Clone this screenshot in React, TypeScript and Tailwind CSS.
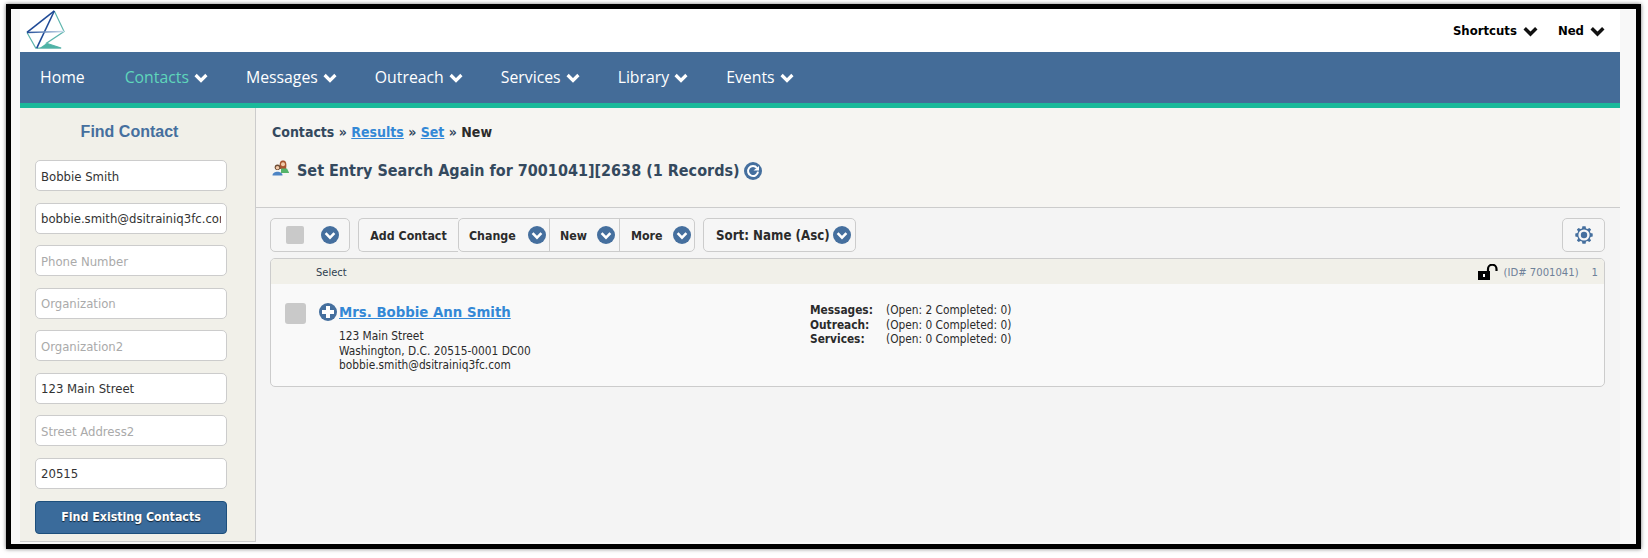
import React from 'react';

const tahoma = "font-['DejaVu_Sans_Condensed','DejaVu_Sans',sans-serif]";

function Chevron({ className = '', color = '#fff', width = 3.2 }: { className?: string; color?: string; width?: number }) {
  return (
    <svg viewBox="0 0 14 10" className={className} fill="none">
      <path d="M1.6 2 L7 7.4 L12.4 2" stroke={color} strokeWidth={width} />
    </svg>
  );
}

function CircleChevron({ className = '' }: { className?: string }) {
  return (
    <svg viewBox="0 0 18 18" className={`w-[18px] h-[18px] shrink-0 ${className}`}>
      <circle cx="9" cy="9" r="9" fill="#456f9e" />
      <path d="M4.6 7.2 L9 11.6 L13.4 7.2" stroke="#fff" strokeWidth="2.6" fill="none" />
    </svg>
  );
}

function Logo() {
  return (
    <svg viewBox="0 0 42 42" className="w-[41px] h-[41px]" fill="none">
      <defs>
        <linearGradient id="bar" x1="0" x2="1" y1="0" y2="0">
          <stop offset="0" stopColor="#1f4a96" />
          <stop offset="1" stopColor="#cfe0ee" />
        </linearGradient>
      </defs>
      <path d="M29 1 L39 22 L21 34 L36 39 L10 39 L1 23" stroke="#5db5ad" strokeWidth="1.2" />
      <path d="M21 34 L36 39 L14 39 Z" fill="#4fb3a6" />
      <path d="M29 1 L1 23" stroke="#1f4a96" strokeWidth="1.6" />
      <path d="M29 1 L11 39" stroke="#1f4a96" strokeWidth="1.6" />
      <path d="M1 23 L39 22" stroke="url(#bar)" strokeWidth="1.6" />
    </svg>
  );
}

function PeopleIcon() {
  return (
    <svg viewBox="0 0 17 16" className="w-[17px] h-[16px] shrink-0 mt-[-7px]">
      {/* back person */}
      <path d="M8 9 C7 3 8 0.5 11 0.5 C14 0.5 15 3 14 9 Z" fill="#a8552f" />
      <circle cx="11" cy="4.2" r="2" fill="#f2c9a8" />
      <path d="M9 13 V8.5 H15 L17 12.5 V13 Z" fill="#55b36a" />
      {/* front person */}
      <circle cx="5.5" cy="7.2" r="2.8" fill="#6b4a32" />
      <circle cx="5.5" cy="7.8" r="1.8" fill="#f2c9a8" />
      <path d="M0.5 15.5 C0.5 10.5 10.5 10.5 10.5 15.5 Z" fill="#4d84c4" />
    </svg>
  );
}

function RefreshIcon() {
  return (
    <svg viewBox="0 0 18 18" className="w-[18px] h-[18px] shrink-0">
      <circle cx="9" cy="9" r="9" fill="#456f9e" />
      <path d="M13 6 A5 5 0 1 0 14 9.6" stroke="#fff" strokeWidth="2" fill="none" />
      <path d="M9.5 8.6 H15 V4 Z" fill="#fff" />
    </svg>
  );
}

function GearIcon() {
  return (
    <svg viewBox="0 0 18 18" className="w-[18px] h-[18px]">
      <path
        d="M7.4 0.3 H10.6 L11 2.5 L12.5 3.1 L14.4 1.9 L16.1 3.6 L14.9 5.5 L15.5 7 L17.7 7.4 V10.6 L15.5 11 L14.9 12.5 L16.1 14.4 L14.4 16.1 L12.5 14.9 L11 15.5 L10.6 17.7 H7.4 L7 15.5 L5.5 14.9 L3.6 16.1 L1.9 14.4 L3.1 12.5 L2.5 11 L0.3 10.6 V7.4 L2.5 7 L3.1 5.5 L1.9 3.6 L3.6 1.9 L5.5 3.1 L7 2.5 Z"
        fill="#456f9e"
      />
      <circle cx="9" cy="9" r="5.6" fill="#f6f6f6" />
      <circle cx="9" cy="9" r="3.2" fill="#456f9e" />
    </svg>
  );
}

function UnlockIcon() {
  return (
    <svg viewBox="0 0 20 16" className="w-[20px] h-[16px] shrink-0">
      <rect x="0" y="7" width="12" height="9" fill="#000" />
      <rect x="5" y="10" width="2" height="3" fill="#fff" />
      <path d="M10 8 V5 A4 4 0 0 1 18.5 5 V7" stroke="#000" strokeWidth="2.2" fill="none" />
    </svg>
  );
}

function PlusIcon() {
  return (
    <svg viewBox="0 0 18 18" className="w-[18px] h-[18px] shrink-0">
      <circle cx="9" cy="9" r="9" fill="#456f9e" />
      <path d="M9 3 V15 M3 9 H15" stroke="#fff" strokeWidth="4" />
    </svg>
  );
}

const navItems = ['Contacts', 'Messages', 'Outreach', 'Services', 'Library', 'Events'];

const fields = [
  { value: 'Bobbie Smith', placeholder: 'Name' },
  { value: 'bobbie.smith@dsitrainiq3fc.com', placeholder: 'Email' },
  { value: '', placeholder: 'Phone Number' },
  { value: '', placeholder: 'Organization' },
  { value: '', placeholder: 'Organization2' },
  { value: '123 Main Street', placeholder: 'Street Address' },
  { value: '', placeholder: 'Street Address2' },
  { value: '20515', placeholder: 'Zip' },
];

const stats = [
  { label: 'Messages:', value: '(Open: 2 Completed: 0)' },
  { label: 'Outreach:', value: '(Open: 0 Completed: 0)' },
  { label: 'Services:', value: '(Open: 0 Completed: 0)' },
];

export default function App() {
  return (
    <div className={`w-[1648px] h-[558px] bg-white pt-[4px] pl-[6px] overflow-hidden ${tahoma}`}>
      <div className="w-[1635px] h-[545px] border-[5px] border-black bg-[#f8f8f8] pl-[9px] shadow-[0_0_4px_#777]">
        <div className="w-[1600px]">
          {/* top bar */}
          <div className="h-[43px] bg-white flex items-center justify-between pl-[6px] pr-[15px]">
            <Logo />
            <div className="flex items-center text-[13px] font-bold text-black gap-[20px] pt-[1px]">
              <div className="flex items-center gap-[6px]">
                <span>Shortcuts</span>
                <Chevron className="w-[15px] h-[11px]" color="#111" />
              </div>
              <div className="flex items-center gap-[6px]">
                <span>Ned</span>
                <Chevron className="w-[15px] h-[11px]" color="#111" />
              </div>
            </div>
          </div>

          {/* nav */}
          <div className="h-[56px] bg-[#446c98] border-b-[5px] border-[#1ab99a] flex items-center pl-[20px] gap-[38px] font-['Open_Sans',sans-serif] text-[15.8px] text-white">
            <span className="mr-[2px]">Home</span>
            {navItems.map((item) => (
              <div key={item} className={`flex items-center gap-[5px] ${item === 'Contacts' ? 'text-[#5fd6bb]' : ''}`}>
                <span>{item}</span>
                <Chevron className="w-[14px] h-[10px] mt-[1px]" />
              </div>
            ))}
          </div>

          <div className="flex h-[434px]">
            {/* sidebar */}
            <div className="w-[236px] shrink-0 bg-[#f1f0e9] border-r border-b border-[#cccccc] px-[15px] pt-[15px]">
              <h2 className="text-center text-[16px] font-bold text-[#456f9e] font-['Liberation_Sans',sans-serif] leading-[18px] mb-[19px] mr-[16px]">
                Find Contact
              </h2>
              <div className="flex flex-col gap-[11.5px]">
                {fields.map((f) => (
                  <input
                    key={f.placeholder}
                    defaultValue={f.value}
                    placeholder={f.placeholder}
                    className="w-[192px] h-[31px] bg-white border border-[#cccccc] rounded-[5px] px-[5px] pt-[1px] text-[13px] text-[#333333] placeholder:text-[#aaaaaa] outline-none"
                  />
                ))}
                <button className="w-[192px] h-[33px] mt-[1px] bg-[#3a6b9b] border border-[#1d4f7c] rounded-[4px] text-white text-[12.3px] font-bold [text-shadow:0_1px_1px_#123]">
                  Find Existing Contacts
                </button>
              </div>
            </div>

            {/* main */}
            <div className="flex-1 min-w-0 bg-[#f4f4f4]">
              <div className="h-[100px] bg-[#f6f5f2] border-b border-[#cccccc] px-[16px] pt-[16px] text-[#34495e]">
                <div className="text-[14px] font-bold leading-[17px]">
                  Contacts » <a className="text-[#3388d6] underline">Results</a> » <a className="text-[#3388d6] underline">Set</a> »{' '}
                  <span className="text-[#2b2b2b]">New</span>
                </div>
                <div className="flex items-center mt-[19px]">
                  <PeopleIcon />
                  <span className="text-[16px] font-bold ml-[8px] mr-[4px] leading-[22px]">
                    Set Entry Search Again for 7001041][2638 (1 Records)
                  </span>
                  <RefreshIcon />
                </div>
              </div>

              <div className="pl-[14px] pr-[15px] pt-[10px]">
                {/* toolbar */}
                <div className="flex items-center h-[34px] text-[12.3px] font-bold text-[#2b2b2b]">
                  <div className="w-[80px] h-full border border-[#cccccc] rounded-[5px] bg-[#f6f6f6] flex items-center justify-between pl-[15px] pr-[10px]">
                    <span className="w-[18px] h-[18px] rounded-[2px] bg-[#c9c9c9]" />
                    <CircleChevron />
                  </div>
                  <div className="ml-[8px] w-[100px] h-full pt-[2px] border border-r-0 border-[#cccccc] rounded-l-[5px] bg-[#f6f6f6] flex items-center justify-center">
                    Add Contact
                  </div>
                  <div className="flex h-full border border-[#cccccc] rounded-[5px] bg-[#f6f6f6]">
                    <div className="w-[90px] flex items-center justify-between pl-[10px] pr-[3px]">
                      <span className="pt-[2px]">Change</span>
                      <CircleChevron />
                    </div>
                    <div className="w-[70px] flex items-center justify-between pl-[10px] pr-[4px] border-l border-[#cccccc]">
                      <span className="pt-[2px]">New</span>
                      <CircleChevron />
                    </div>
                    <div className="w-[75px] flex items-center justify-between pl-[11px] pr-[3px] border-l border-[#cccccc]">
                      <span className="pt-[2px]">More</span>
                      <CircleChevron />
                    </div>
                  </div>
                  <div className="ml-[8px] w-[153px] h-full border border-[#cccccc] rounded-[5px] bg-[#f6f6f6] flex items-center justify-between pl-[12px] pr-[4px]">
                    <span className="pt-[2px] text-[13.2px]">Sort: Name (Asc)</span>
                    <CircleChevron />
                  </div>
                  <div className="ml-auto w-[43px] h-full border border-[#cccccc] rounded-[5px] bg-[#f6f6f6] flex items-center justify-center">
                    <GearIcon />
                  </div>
                </div>

                {/* result card */}
                <div className="mt-[6px] h-[129px] border border-[#cccccc] rounded-[5px] bg-[#f9f9f9] overflow-hidden">
                  <div className="h-[25px] bg-[#f1f0e9] flex items-center pl-[45px] pr-[6px] pt-[4px] text-[11px] text-[#2f3e50]">
                    <span>Select</span>
                    <div className="ml-auto flex items-center text-[11.2px] text-[#6f8199] mt-[-3px]">
                      <UnlockIcon />
                      <span className="ml-[6px] pt-[2px]">(ID# 7001041)</span>
                      <span className="ml-[13px] pt-[2px]">1</span>
                    </div>
                  </div>
                  <div className="flex pl-[14px] pt-[19px]">
                    <span className="w-[21px] h-[21px] rounded-[3px] bg-[#c9c9c9] shrink-0" />
                    <div className="ml-[13px] w-[491px] shrink-0">
                      <div className="flex items-center h-[18px]">
                        <PlusIcon />
                        <a className="ml-[2px] text-[14.8px] font-bold text-[#3388d6] underline">Mrs. Bobbie Ann Smith</a>
                      </div>
                      <div className="ml-[20px] mt-[8px] text-[11.8px] leading-[14.5px] text-[#2b2b2b]">
                        <div>123 Main Street</div>
                        <div>Washington, D.C. 20515-0001 DC00</div>
                        <div>bobbie.smith@dsitrainiq3fc.com</div>
                      </div>
                    </div>
                    <div className="text-[11.8px] leading-[14.5px] text-[#2b2b2b]">
                      {stats.map((s) => (
                        <div key={s.label} className="flex">
                          <span className="w-[76px] font-bold">{s.label}</span>
                          <span>{s.value}</span>
                        </div>
                      ))}
                    </div>
                  </div>
                </div>
              </div>
            </div>
          </div>
        </div>
      </div>
    </div>
  );
}
